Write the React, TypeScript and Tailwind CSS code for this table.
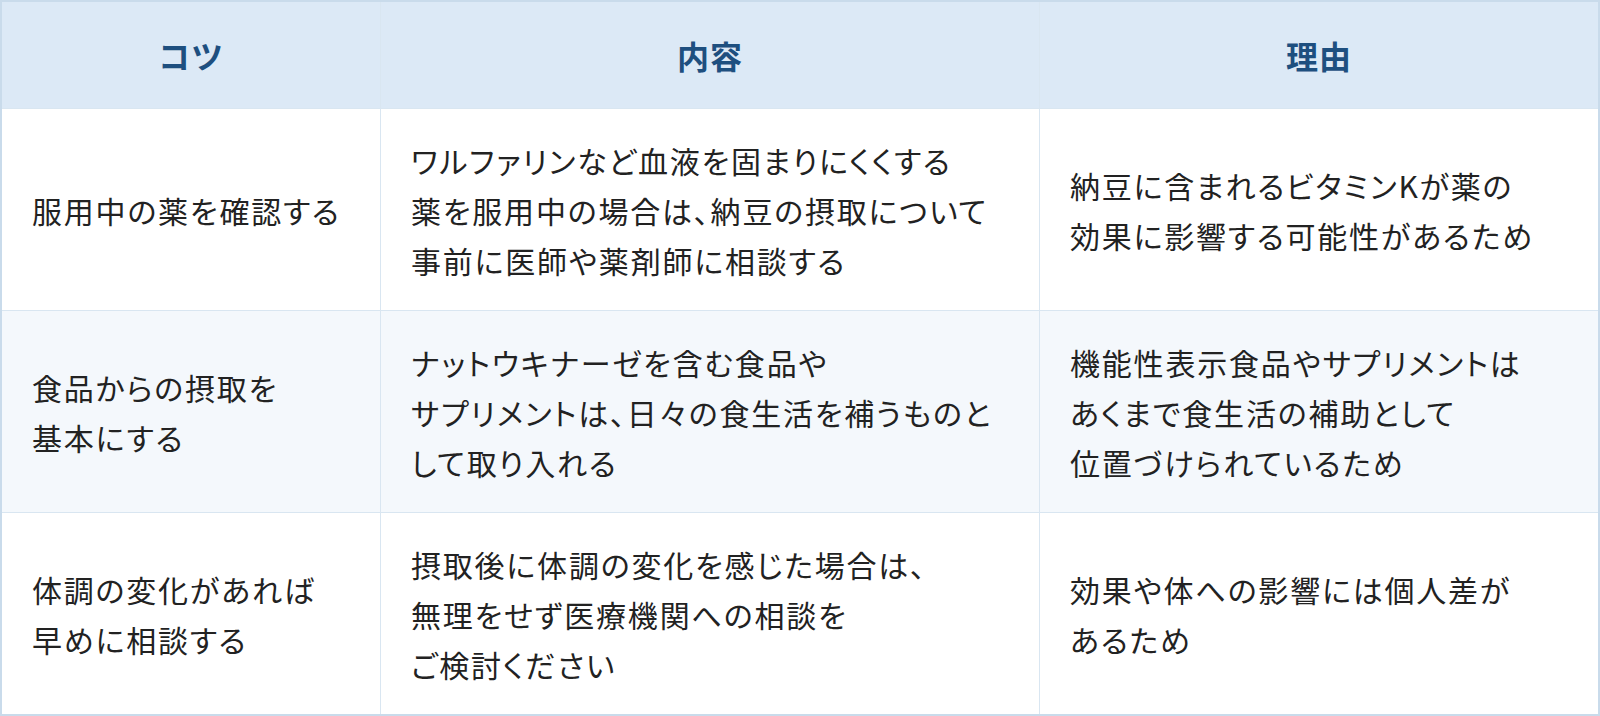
const rows = [
  {
    tip: '服用中の薬を確認する',
    detail: 'ワルファリンなど血液を固まりにくくする\n薬を服用中の場合は、納豆の摂取について\n事前に医師や薬剤師に相談する',
    reason: '納豆に含まれるビタミンKが薬の\n効果に影響する可能性があるため',
  },
  {
    tip: '食品からの摂取を\n基本にする',
    detail: 'ナットウキナーゼを含む食品や\nサプリメントは、日々の食生活を補うものと\nして取り入れる',
    reason: '機能性表示食品やサプリメントは\nあくまで食生活の補助として\n位置づけられているため',
  },
  {
    tip: '体調の変化があれば\n早めに相談する',
    detail: '摂取後に体調の変化を感じた場合は、\n無理をせず医療機関への相談を\nご検討ください',
    reason: '効果や体への影響には個人差が\nあるため',
  },
];

const Cell = ({ text, alt }: { text: string; alt: boolean }) => (
  <div
    className={`flex h-[201px] items-center whitespace-pre pl-[30px] text-[30px] leading-[50px] tracking-[1.8px] text-[#222222] [font-feature-settings:'palt'] ${
      alt ? 'bg-[#f4f8fc]' : 'bg-white'
    }`}>
    {text}
  </div>
);

export default function App() {
  return (
    <div
      className="h-[716px] w-[1600px] bg-white"
      style={{ fontFamily: '"Noto Sans CJK JP", "Noto Sans", sans-serif' }}>
      <div className="grid grid-cols-[378px_658px_1fr] gap-px border-2 border-[#c9dbeb] bg-[#d9e6f1]">
        {['コツ', '内容', '理由'].map(h => (
          <div
            key={h}
            className="flex h-[106px] items-center justify-center bg-[#dce9f6] text-[32px] font-bold tracking-[1px] text-[#1e4f7f]">
            {h}
          </div>
        ))}
        {rows.map((row, i) => (
          <div key={row.tip} className="contents">
            <Cell text={row.tip} alt={i === 1} />
            <Cell text={row.detail} alt={i === 1} />
            <Cell text={row.reason} alt={i === 1} />
          </div>
        ))}
      </div>
    </div>
  );
}
